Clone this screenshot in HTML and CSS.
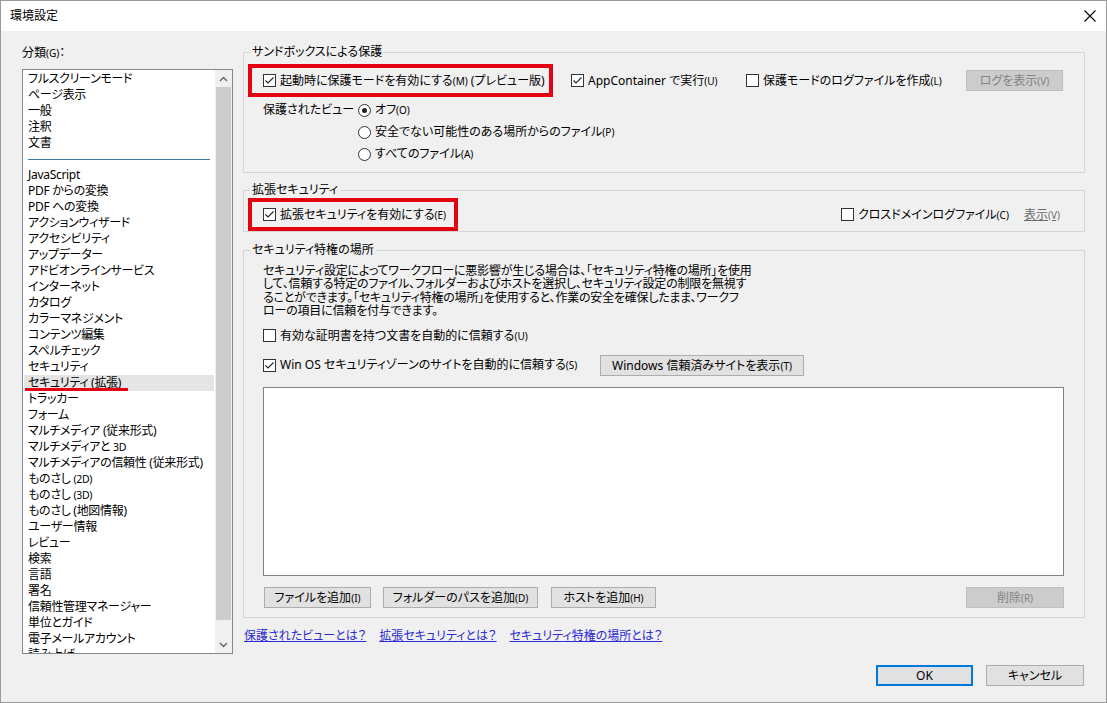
FILE: index.html
```html
<!DOCTYPE html>
<html lang="ja">
<head>
<meta charset="utf-8">
<title>環境設定</title>
<link rel="stylesheet" href="styles.css">
</head>
<body>
<div class="window">
  <div class="titlebar">
    <span class="title">環境設定</span>
    <svg class="close" width="12" height="12" viewBox="0 0 12 12"><path d="M0.5 0.5 L11.5 11.5 M11.5 0.5 L0.5 11.5" stroke="#000" stroke-width="1.1" fill="none"/></svg>
  </div>
  <div class="content">
    <div class="main">
      <div class="left">
        <div class="cat-label">分類<span class="mn">(G)</span>：</div>
        <div class="listbox">
          <ul class="items">
            <li>フルスクリーンモード</li>
            <li>ページ表示</li>
            <li>一般</li>
            <li>注釈</li>
            <li>文書</li>
            <li class="sep"></li>
            <li>JavaScript</li>
            <li>PDF からの変換</li>
            <li>PDF への変換</li>
            <li>アクションウィザード</li>
            <li>アクセシビリティ</li>
            <li>アップデーター</li>
            <li>アドビオンラインサービス</li>
            <li>インターネット</li>
            <li>カタログ</li>
            <li>カラーマネジメント</li>
            <li>コンテンツ編集</li>
            <li>スペルチェック</li>
            <li>セキュリティ</li>
            <li class="selected">セキュリティ (拡張)</li>
            <li>トラッカー</li>
            <li>フォーム</li>
            <li>マルチメディア (従来形式)</li>
            <li>マルチメディアと <span class="sm">3D</span></li>
            <li>マルチメディアの信頼性 (従来形式)</li>
            <li>ものさし <span class="sm">(2D)</span></li>
            <li>ものさし <span class="sm">(3D)</span></li>
            <li>ものさし (地図情報)</li>
            <li>ユーザー情報</li>
            <li>レビュー</li>
            <li>検索</li>
            <li>言語</li>
            <li>署名</li>
            <li>信頼性管理マネージャー</li>
            <li>単位とガイド</li>
            <li>電子メールアカウント</li>
            <li>読み上げ</li>
          </ul>
          <div class="scrollbar">
            <div class="arrow"><svg width="9" height="6" viewBox="0 0 9 6"><polyline points="1,5 4.5,1.5 8,5" fill="none" stroke="#606060" stroke-width="1.3"/></svg></div>
            <div class="track"><div class="thumb"></div></div>
            <div class="arrow"><svg width="9" height="6" viewBox="0 0 9 6"><polyline points="1,1 4.5,4.5 8,1" fill="none" stroke="#606060" stroke-width="1.3"/></svg></div>
          </div>
        </div>
      </div>

      <div class="right">
        <fieldset class="group g1">
          <legend>サンドボックスによる保護</legend>
          <div class="row r1">
            <div class="redbox rb1">
              <span class="cb checked"><svg width="11" height="11" viewBox="0 0 11 11"><polyline points="1.5,5.5 4,8 9.5,2.5" fill="none" stroke="#222" stroke-width="1.1"/></svg></span>
              <span class="lbl">起動時に保護モードを有効にする<span class="mn">(M)</span> (プレビュー版)</span>
            </div>
            <div class="opt app">
              <span class="cb checked"><svg width="11" height="11" viewBox="0 0 11 11"><polyline points="1.5,5.5 4,8 9.5,2.5" fill="none" stroke="#222" stroke-width="1.1"/></svg></span>
              <span class="lbl">AppContainer で実行<span class="mn">(U)</span></span>
            </div>
            <div class="opt logopt">
              <span class="cb"></span>
              <span class="lbl">保護モードのログファイルを作成<span class="mn">(L)</span></span>
            </div>
            <div class="btn disabled logbtn">ログを表示<span class="mn">(V)</span></div>
          </div>
          <div class="pv">
            <div class="pv-label">保護されたビュー</div>
            <div class="radios">
              <div class="radio"><span class="rb on"></span><span class="lbl">オフ<span class="mn">(O)</span></span></div>
              <div class="radio"><span class="rb"></span><span class="lbl">安全でない可能性のある場所からのファイル<span class="mn">(P)</span></span></div>
              <div class="radio"><span class="rb"></span><span class="lbl">すべてのファイル<span class="mn">(A)</span></span></div>
            </div>
          </div>
        </fieldset>

        <fieldset class="group g2">
          <legend>拡張セキュリティ</legend>
          <div class="row r2">
            <div class="redbox rb2">
              <span class="cb checked"><svg width="11" height="11" viewBox="0 0 11 11"><polyline points="1.5,5.5 4,8 9.5,2.5" fill="none" stroke="#222" stroke-width="1.1"/></svg></span>
              <span class="lbl">拡張セキュリティを有効にする<span class="mn">(E)</span></span>
            </div>
            <div class="opt cross">
              <span class="cb"></span>
              <span class="lbl">クロスドメインログファイル<span class="mn">(C)</span></span>
            </div>
            <span class="dislink">表示<span class="mn">(V)</span></span>
          </div>
        </fieldset>

        <fieldset class="group g3">
          <legend>セキュリティ特権の場所</legend>
          <div class="g3-inner">
            <p class="desc">セキュリティ設定によってワークフローに悪影響が生じる場合は、「セキュリティ特権の場所」を使用<br>して、信頼する特定のファイル、フォルダーおよびホストを選択し、セキュリティ設定の制限を無視す<br>ることができます。「セキュリティ特権の場所」を使用すると、作業の安全を確保したまま、ワークフ<br>ローの項目に信頼を付与できます。</p>
            <div class="opt cert">
              <span class="cb"></span>
              <span class="lbl">有効な証明書を持つ文書を自動的に信頼する<span class="mn">(U)</span></span>
            </div>
            <div class="row winrow">
              <div class="opt winos">
                <span class="cb checked"><svg width="11" height="11" viewBox="0 0 11 11"><polyline points="1.5,5.5 4,8 9.5,2.5" fill="none" stroke="#222" stroke-width="1.1"/></svg></span>
                <span class="lbl">Win OS セキュリティゾーンのサイトを自動的に信頼する<span class="mn">(S)</span></span>
              </div>
              <div class="btn winbtn">Windows 信頼済みサイトを表示<span class="mn">(T)</span></div>
            </div>
            <div class="whitebox"></div>
            <div class="row btnrow">
              <div class="btn b-file">ファイルを追加<span class="mn">(I)</span></div>
              <div class="btn b-folder">フォルダーのパスを追加<span class="mn">(D)</span></div>
              <div class="btn b-host">ホストを追加<span class="mn">(H)</span></div>
              <div class="btn disabled b-del">削除<span class="mn">(R)</span></div>
            </div>
          </div>
        </fieldset>

        <div class="links">
          <a href="#" class="link">保護されたビューとは？</a>
          <a href="#" class="link">拡張セキュリティとは？</a>
          <a href="#" class="link">セキュリティ特権の場所とは？</a>
        </div>
      </div>
    </div>

    <div class="footer">
      <div class="btn ok">OK</div>
      <div class="btn cancel">キャンセル</div>
    </div>
  </div>
</div>
</body>
</html>
```

FILE: styles.css
```css
* { box-sizing: border-box; }
html, body { margin: 0; padding: 0; }
body {
  width: 1107px;
  height: 703px;
  overflow: hidden;
  background: #f0f0f0;
  font-family: "Noto Sans", "Noto Sans CJK JP", sans-serif;
  font-size: 12px;
  color: #000;
  font-feature-settings: "palt";
}
.window {
  width: 1107px;
  height: 703px;
  border: 1px solid #9a9a9a;
  display: flex;
  flex-direction: column;
  background: #f0f0f0;
}
.titlebar {
  height: 30px;
  flex: none;
  background: #fff;
  display: flex;
  align-items: center;
  padding: 0 10px 0 9px;
}
.title { flex: 1; line-height: 16px; }
.close { display: block; }

.content {
  flex: 1;
  display: flex;
  flex-direction: column;
  padding: 14px 21px 16px 21px;
}
.main { display: flex; gap: 10px; align-items: flex-start; }
.left { width: 211px; flex: none; }
.cat-label { line-height: 16px; height: 16px; }
.mn { font-size: 10px; }
.sm { font-size: 10.5px; }

.listbox {
  margin-top: 8px;
  height: 585px;
  border: 1px solid #828790;
  background: #fff;
  display: flex;
}
.items {
  list-style: none;
  margin: 0;
  padding: 1px 0 0 0;
  flex: 1;
  overflow: hidden;
  letter-spacing: -0.3px;
}
.items li {
  height: 16px;
  line-height: 16px;
  padding-left: 4px;
  margin: 0 1px;
  white-space: nowrap;
  position: relative;
}
.items li.sep { display: flex; align-items: center; padding: 0 3px 0 4px; }
.items li.sep::before {
  content: "";
  display: block;
  height: 1px;
  width: 182px;
  background: #3d7aab;
  margin-top: 1px;
}
.items li.selected { background: #e5e5e5; }
.items li.selected::after {
  content: "";
  position: absolute;
  left: 1px;
  top: 13px;
  width: 103px;
  height: 3px;
  background: #e50012;
}
.scrollbar {
  width: 17px;
  flex: none;
  background: #f0f0f0;
  display: flex;
  flex-direction: column;
}
.arrow {
  height: 17px;
  flex: none;
  display: flex;
  align-items: center;
  justify-content: center;
}
.arrow svg { display: block; }
.track { flex: 1; padding: 0 1px; }
.thumb { height: 533px; background: #cdcdcd; }

.right { width: 842px; flex: none; }
.group {
  margin: 0;
  min-width: 0;
  border: 1px solid #d5d5d5;
  padding: 0 4px;
}
.group legend {
  padding: 0 2px;
  margin-left: 2px;
  line-height: 16px;
  height: 16px;
}
.g1 { margin-top: -1px; padding-top: 4px; padding-bottom: 7px; }
.g2 { margin-top: 9px; padding-top: 0; padding-bottom: 0; }
.g3 { margin-top: 10px; padding-top: 6px; padding-bottom: 9px; }

.row { display: flex; align-items: center; }
.opt { display: flex; align-items: center; white-space: nowrap; }
.lbl { white-space: nowrap; line-height: 16px; }
.cb {
  width: 13px;
  height: 13px;
  flex: none;
  border: 1px solid #333;
  background: #fff;
  margin-right: 4px;
  display: flex;
  align-items: center;
  justify-content: center;
}
.cb svg { display: block; }
.rb {
  width: 13px;
  height: 13px;
  flex: none;
  border: 1px solid #333;
  border-radius: 50%;
  background: #fff;
  margin-right: 4px;
  display: flex;
  align-items: center;
  justify-content: center;
}
.rb.on::after {
  content: "";
  width: 5px;
  height: 5px;
  border-radius: 50%;
  background: #222;
}

.redbox {
  border: 4px solid #e50012;
  height: 33px;
  display: flex;
  align-items: center;
  padding-left: 11px;
  flex: none;
  white-space: nowrap;
}
.rb1 { width: 305px; }
.rb2 { width: 210px; }
.app { margin-left: 18px; width: 175px; }
.logopt { width: 220px; }

.btn {
  height: 21px;
  line-height: 19px;
  border: 1px solid #adadad;
  background: #e1e1e1;
  text-align: center;
  white-space: nowrap;
  flex: none;
}
.btn.disabled { background: #cccccc; border-color: #bfbfbf; color: #838383; }
.logbtn { width: 97px; }

.pv { display: flex; margin-top: 2px; padding-left: 15px; }
.pv-label { width: 95px; height: 22px; line-height: 22px; }
.radio { height: 22px; display: flex; align-items: center; }

.r2 { padding-right: 20px; }
.cross { margin-left: auto; width: 183px; }
.dislink { color: #6d6d6d; text-decoration: underline; line-height: 16px; }

.g3-inner { padding: 0 16px 0 15px; }
.desc {
  margin: 0;
  line-height: 13.4px;
  white-space: nowrap;
  letter-spacing: -0.2px;
}
.cert { height: 20px; margin-top: 8px; }
.winrow { margin-top: 9px; height: 21px; }
.winos { width: 337px; }
.winbtn { width: 204px; }
.whitebox {
  margin-top: 11px;
  height: 189px;
  background: #fff;
  border: 1px solid #828282;
}
.btnrow { margin-top: 11px; padding-left: 1px; }
.b-file { width: 107px; }
.b-folder { width: 155px; margin-left: 12px; }
.b-host { width: 105px; margin-left: 13px; }
.b-del { width: 98px; margin-left: auto; }

.links { margin-top: 10px; padding-left: 1px; display: flex; gap: 13px; line-height: 16px; }
.link { color: #2b2bd1; text-decoration: underline; }

.footer {
  margin-top: auto;
  display: flex;
  justify-content: flex-end;
  gap: 13px;
  padding-right: 1px;
}
.ok { width: 97px; border: 2px solid #0078d7; line-height: 17px; }
.cancel { width: 98px; }
```
